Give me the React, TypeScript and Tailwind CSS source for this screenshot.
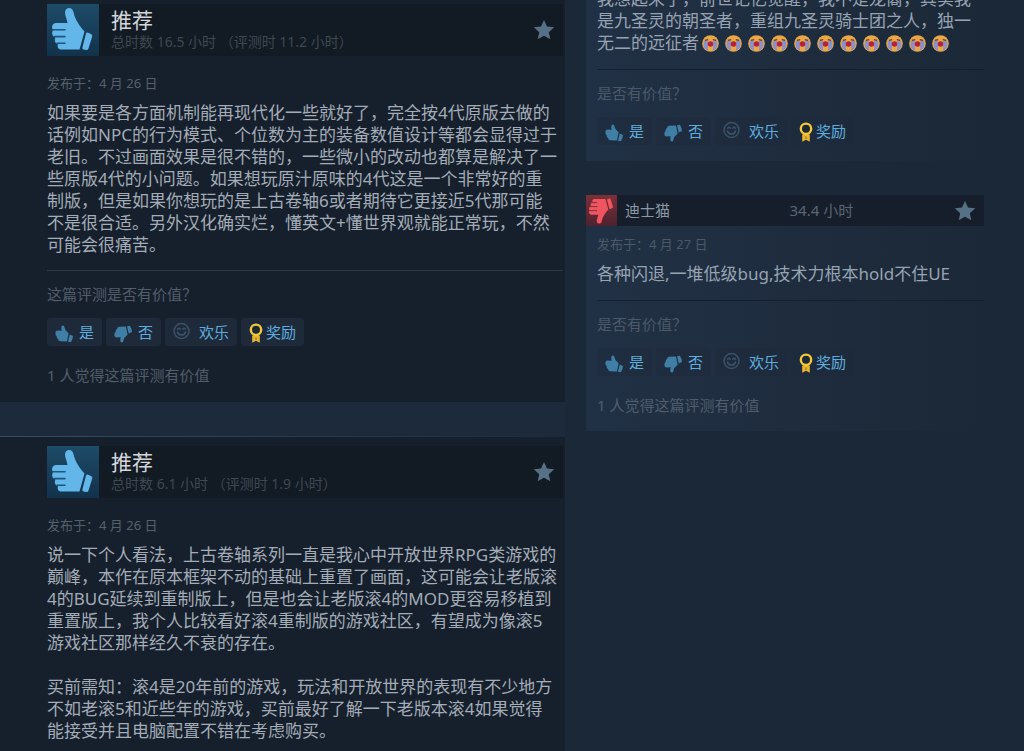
import clsx from "clsx";
import type React from "react";

interface Review {
  id: string;
  date: string;
  paragraphs: string[];
  helpful?: string;
}

interface FeaturedReview extends Review {
  playtime: string;
}

interface RecentReview extends Review {
  author?: string;
  hours?: string;
  tears?: number;
}

const featured: FeaturedReview[] = [
  {
    id: "f1",
    playtime: "总时数 16.5 小时 （评测时 11.2 小时）",
    date: "发布于：4 月 26 日",
    paragraphs: [
      "如果要是各方面机制能再现代化一些就好了，完全按4代原版去做的话例如NPC的行为模式、个位数为主的装备数值设计等都会显得过于老旧。不过画面效果是很不错的，一些微小的改动也都算是解决了一些原版4代的小问题。如果想玩原汁原味的4代这是一个非常好的重制版，但是如果你想玩的是上古卷轴6或者期待它更接近5代那可能不是很合适。另外汉化确实烂，懂英文+懂世界观就能正常玩，不然可能会很痛苦。",
    ],
    helpful: "1 人觉得这篇评测有价值",
  },
  {
    id: "f2",
    playtime: "总时数 6.1 小时 （评测时 1.9 小时）",
    date: "发布于：4 月 26 日",
    paragraphs: [
      "说一下个人看法，上古卷轴系列一直是我心中开放世界RPG类游戏的巅峰，本作在原本框架不动的基础上重置了画面，这可能会让老版滚4的BUG延续到重制版上，但是也会让老版滚4的MOD更容易移植到重置版上，我个人比较看好滚4重制版的游戏社区，有望成为像滚5游戏社区那样经久不衰的存在。",
      "买前需知：滚4是20年前的游戏，玩法和开放世界的表现有不少地方不如老滚5和近些年的游戏，买前最好了解一下老版本滚4如果觉得能接受并且电脑配置不错在考虑购买。",
    ],
  },
];

const recent: RecentReview[] = [
  {
    id: "r1",
    date: "",
    paragraphs: [
      "我想起来了，前世记忆觉醒，我不是龙裔，其实我是九圣灵的朝圣者，重组九圣灵骑士团之人，独一无二的远征者",
    ],
    tears: 11,
  },
  {
    id: "r2",
    author: "迪士猫",
    hours: "34.4 小时",
    date: "发布于：4 月 27 日",
    paragraphs: ["各种闪退,一堆低级bug,技术力根本hold不住UE"],
    helpful: "1 人觉得这篇评测有价值",
  },
];

function Thumb({ className, lines }: { className?: string; lines: string }) {
  return (
    <svg viewBox="0 0 52 52" className={className} aria-hidden="true">
      <path
        fill="currentColor"
        d="M18 8.5C18 5.5 20 4 22 4c2.500 0 4 1.600 4.600 4.500C27.800 13.500 30 19 37.500 27.500L32.500 45.500H14.500C11 45.500 10 43 11 40 8 39.500 7 36 8.500 33.500 5 32.500 4.500 29 6 26 4 23 5.500 19 9 19H20.500C20 15 18 12 18 8.500Z"
      />
      <path
        fill="currentColor"
        d="M40.500 28.500l3.500 1.500q1.600.8 1.200 2.400L41.500 44.500q-.6 1.800-2.300 1.500l-2.600-.5q-1.700-.4-1.200-2.100L39 29.500q.4-1.300 1.500-1Z"
      />
      <path
        d="M6 25.800h12M7.500 32.600h10.500M10 39.200h8"
        stroke={lines}
        strokeWidth="1.600"
        strokeLinecap="round"
      />
    </svg>
  );
}

function SmallThumb({ className }: { className?: string }) {
  return (
    <svg
      viewBox="0 0 18 18"
      className={clsx("w-[18px] h-[18px] mt-1 text-[#3f7ea5]", className)}
      fill="currentColor"
      aria-hidden="true"
    >
      <path d="M6.300 2.200Q6.400.4 8 .5 9.300.6 9.500 2.400 9.800 5.400 13.600 8.200L12 16.500 5 16.200Q3.200 16 3 14 1.500 13.200 1.600 11.300.1 10 .4 8 .3 5.600 2.800 5.500L6.800 5.700Q6 4 6.300 2.200Z" />
      <path d="M14.700 9.500L18 11Q17.800 14.500 15.900 17.300L13 16.700Z" />
    </svg>
  );
}

function StarIcon() {
  return (
    <svg viewBox="0 0 22 22" className="w-[22px] h-[22px]" aria-hidden="true">
      <path
        d="M11 1l3 6.500 7.200.8-5.400 4.900 1.500 7.100L11 16.800l-6.300 3.500 1.500-7.100L.8 8.300 8 7.500Z"
        fill="#567085"
      />
    </svg>
  );
}

function FunnyIcon() {
  return (
    <svg
      viewBox="0 0 18 18"
      className="w-[18px] h-[18px] -mt-0.5"
      fill="none"
      stroke="#3b5168"
      strokeWidth="1.500"
      strokeLinecap="round"
      aria-hidden="true"
    >
      <circle cx="8.500" cy="9" r="7.500" />
      <path d="M4.500 10c.8 4 7.200 4 8 0M4.700 7.200q1.300-1.800 2.600 0M9.800 7.200q1.300-1.800 2.600 0" />
    </svg>
  );
}

function AwardIcon() {
  return (
    <svg viewBox="0 0 14 20" className="w-3.5 h-5 mt-0.5" aria-hidden="true">
      <path d="M3.200 12.500h7.600V19.700L7 17.800 3.200 19.700Z" fill="#e8b530" />
      <circle
        cx="7"
        cy="6.800"
        r="5.200"
        fill="#1d2836"
        stroke="#f2c939"
        strokeWidth="2.400"
      />
      <path d="M7 14.500v2.500" stroke="#8a6b25" strokeWidth="1" />
    </svg>
  );
}

function CryingFace() {
  return (
    <svg
      viewBox="0 0 18 18"
      className="inline-block w-[17px] h-[17px] mx-[3px] -mt-0.5"
      role="img"
      aria-label="大哭"
    >
      <circle cx="9" cy="9" r="8.800" fill="#e9a845" />
      <path d="M2 6h4.300V16.800Q2.300 14.800 1.700 11Z" fill="#8b90c6" />
      <path d="M11.700 6H16l.3 5q-.6 3.800-4.600 5.800Z" fill="#8b90c6" />
      <path
        d="M3 5.600L6.600 4.900M11.400 4.900l3.600.7"
        stroke="#6b3c25"
        strokeWidth="1.300"
      />
      <circle cx="9" cy="9.500" r="2.900" fill="#b5213a" />
    </svg>
  );
}

function VoteButton({
  icon,
  label,
  subtle,
  className,
}: {
  icon: React.ReactNode;
  label: string;
  subtle?: boolean;
  className: string;
}) {
  return (
    <button
      type="button"
      className={clsx(
        "flex h-7 items-center rounded-sm px-2 text-[15px] text-[#5fadde] cursor-pointer",
        subtle ? "bg-[#1d2a3b]/50" : "bg-[#1e2a3a]",
        className,
      )}
    >
      {icon}
      {label}
    </button>
  );
}

function VoteBar({ subtle }: { subtle?: boolean }) {
  return (
    <div className="mt-3 flex gap-1">
      <VoteButton
        subtle={subtle}
        className="gap-1.5"
        label="是"
        icon={<SmallThumb />}
      />
      <VoteButton
        subtle={subtle}
        className="gap-1.5"
        label="否"
        icon={<SmallThumb className="-scale-y-100" />}
      />
      <VoteButton
        subtle={subtle}
        className="gap-2"
        label="欢乐"
        icon={<FunnyIcon />}
      />
      <VoteButton
        subtle={subtle}
        className="gap-[3px]"
        label="奖励"
        icon={<AwardIcon />}
      />
    </div>
  );
}

function FeaturedCard({ review }: { review: FeaturedReview }) {
  return (
    <article className="bg-[#16202c] pl-[47px] pr-0.5">
      <header className="flex h-[52px] items-center bg-[#121a23]">
        <div className="w-[52px] h-[52px] bg-linear-to-b from-[#1d4b68] to-[#12324b]">
          <Thumb className="w-full h-full text-[#62b6ea]" lines="#1f5578" />
        </div>
        <div className="ml-3 flex-1">
          <h2 className="text-[21px] leading-6 text-[#d3d6da]">推荐</h2>
          <p className="text-sm leading-5 text-[#3f4852]">{review.playtime}</p>
        </div>
        <div className="mr-2">
          <StarIcon />
        </div>
      </header>
      <p className="mt-[17px] text-[13px] leading-5 text-[#55606d]">
        {review.date}
      </p>
      <div className="mt-[9px] space-y-[22px] pr-[5px] text-[17px] leading-[22px] text-[#a3acb7]">
        {review.paragraphs.map((text) => (
          <p key={text}>{text}</p>
        ))}
      </div>
      {review.helpful && (
        <div className="mt-3.5 border-t border-[#2b3a49] pt-[11px] pb-[15px]">
          <p className="text-[15px] leading-6 text-[#525d6a]">
            这篇评测是否有价值？
          </p>
          <VoteBar />
          <p className="mt-[17px] text-[15px] leading-6 text-[#525d6a]">
            {review.helpful}
          </p>
        </div>
      )}
    </article>
  );
}

function RecentCard({ review }: { review: RecentReview }) {
  return (
    <article className="bg-linear-to-r from-[#213145] to-[#1b2837]">
      {review.author && (
        <header className="flex h-[31px] items-center bg-[#151e2a]">
          <div className="w-[31px] h-[31px] bg-linear-to-b from-[#7c3038] to-[#4d2230]">
            <Thumb
              className="w-full h-full -scale-y-100 text-[#ee5560]"
              lines="#7c3038"
            />
          </div>
          <a href="#author" className="ml-2 flex-1 text-[15px] text-[#8c98a6]">
            {review.author}
          </a>
          <span className="flex-1 text-[15px] text-[#596675]">
            {review.hours}
          </span>
          <div className="mr-2">
            <StarIcon />
          </div>
        </header>
      )}
      <div className={clsx("pl-[11px]", review.helpful ? "pb-3.5" : "pb-4")}>
        {review.date && (
          <p className="pt-2 pb-[9px] text-[13px] leading-5 text-[#4b5968]">
            {review.date}
          </p>
        )}
        <div className="text-[17px] leading-[22px] text-[#97a3b2]">
          {review.paragraphs.map((text) => (
            <p key={text}>
              {text}
              {Array.from({ length: review.tears ?? 0 }, (_, i) => (
                <CryingFace key={i} />
              ))}
            </p>
          ))}
        </div>
        <div className="mt-[15px] border-t border-[#142030] pt-[11px]">
          <p className="text-[15px] leading-6 text-[#4b5969]">是否有价值？</p>
          <VoteBar subtle />
          {review.helpful && (
            <p className="mt-[17px] text-[15px] leading-6 text-[#4f5d6c]">
              {review.helpful}
            </p>
          )}
        </div>
      </div>
    </article>
  );
}

export default function App() {
  return (
    <div className="min-h-screen grid grid-cols-[565fr_398fr] gap-x-[21px] overflow-hidden bg-[#1b2837] pr-10 font-['Noto_Sans','Noto_Sans_CJK_SC',sans-serif]">
      {/* Most helpful reviews */}
      <main className="flex flex-col">
        <div className="bg-[#16202c] pt-1">
          <FeaturedCard review={featured[0]} />
        </div>
        <div className="h-[34px] bg-[#1c2a3b]" />
        <div className="h-px bg-linear-to-r from-[#35505f] to-[#1c2a3b]" />
        <div className="flex-1 bg-[#16202c] pt-[9px] pb-2.5">
          <FeaturedCard review={featured[1]} />
        </div>
      </main>

      {/* Recently posted */}
      <aside className="-mt-3 space-y-[34px]">
        {recent.map((review) => (
          <RecentCard key={review.id} review={review} />
        ))}
      </aside>
    </div>
  );
}
